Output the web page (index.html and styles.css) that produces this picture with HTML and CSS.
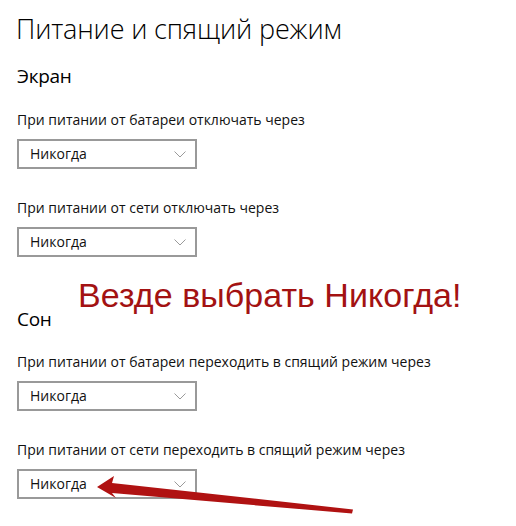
FILE: index.html
```html
<!DOCTYPE html>
<html lang="ru">
<head>
<meta charset="utf-8">
<title>Питание и спящий режим</title>
<link rel="stylesheet" href="styles.css">
</head>
<body>
<main class="page">
  <h1 class="title">Питание и спящий режим</h1>

  <section class="group">
    <h2 class="group-title">Экран</h2>
    <div class="field">
      <div class="label">При питании от батареи отключать через</div>
      <div class="select"><span class="value">Никогда</span><svg class="chev" width="12" height="7" viewBox="0 0 12 7"><polyline points="0.5,0.5 6,6 11.5,0.5"/></svg></div>
    </div>
    <div class="field">
      <div class="label">При питании от сети отключать через</div>
      <div class="select"><span class="value">Никогда</span><svg class="chev" width="12" height="7" viewBox="0 0 12 7"><polyline points="0.5,0.5 6,6 11.5,0.5"/></svg></div>
    </div>
  </section>

  <section class="group group-sleep">
    <h2 class="group-title">Сон</h2>
    <div class="field">
      <div class="label">При питании от батареи переходить в спящий режим через</div>
      <div class="select"><span class="value">Никогда</span><svg class="chev" width="12" height="7" viewBox="0 0 12 7"><polyline points="0.5,0.5 6,6 11.5,0.5"/></svg></div>
    </div>
    <div class="field">
      <div class="label">При питании от сети переходить в спящий режим через</div>
      <div class="select"><span class="value">Никогда</span><svg class="chev" width="12" height="7" viewBox="0 0 12 7"><polyline points="0.5,0.5 6,6 11.5,0.5"/></svg></div>
    </div>
  </section>

  <div class="note">Везде выбрать Никогда!</div>
  <svg class="arrow" width="516" height="526" viewBox="0 0 516 526">
    <polygon class="arrow-shape" points="97,487 114,476 112,483 353,509.5 352,513.5 112,493 116,498"/>
  </svg>
</main>
</body>
</html>
```

FILE: styles.css
```css
html, body {
  margin: 0;
  padding: 0;
  background: #ffffff;
}

.page {
  position: relative;
  width: 516px;
  height: 526px;
  overflow: hidden;
  box-sizing: border-box;
  padding: 9px 0 0 17px;
  font-family: "Open Sans", "Noto Sans", sans-serif;
  color: #000000;
}

.title {
  margin: 0 0 0 -1px;
  font-size: 27px;
  font-weight: 300;
  line-height: 40px;
  letter-spacing: -0.15px;
  white-space: nowrap;
}

.group {
  display: flex;
  flex-direction: column;
}

.group-title {
  margin: 13px 0 20px;
  font-size: 19px;
  font-weight: 400;
  line-height: 28px;
  letter-spacing: -0.3px;
}

.group-sleep .group-title {
  margin: 48px 0 19px;
}

.field {
  display: flex;
  flex-direction: column;
  gap: 9px;
}

.field + .field {
  margin-top: 29px;
}

.label {
  font-size: 14px;
  line-height: 20px;
  color: #111111;
  white-space: nowrap;
}

.select {
  box-sizing: border-box;
  width: 180px;
  height: 30px;
  border: 2px solid #999999;
  display: flex;
  align-items: center;
  justify-content: space-between;
  padding: 0 9px 0 11px;
}

.value {
  font-size: 14px;
  line-height: 20px;
  color: #111111;
}

.chev {
  display: block;
}

.chev polyline {
  fill: none;
  stroke: #9a9a9a;
  stroke-width: 1;
}

.note {
  position: absolute;
  left: 78px;
  top: 275px;
  font-family: "Liberation Sans", Arial, sans-serif;
  font-size: 34px;
  line-height: 40px;
  letter-spacing: 0.05px;
  color: #a31212;
  white-space: nowrap;
}

.arrow {
  position: absolute;
  left: 0;
  top: 0;
  pointer-events: none;
}

.arrow-shape {
  fill: #b01212;
}
```
